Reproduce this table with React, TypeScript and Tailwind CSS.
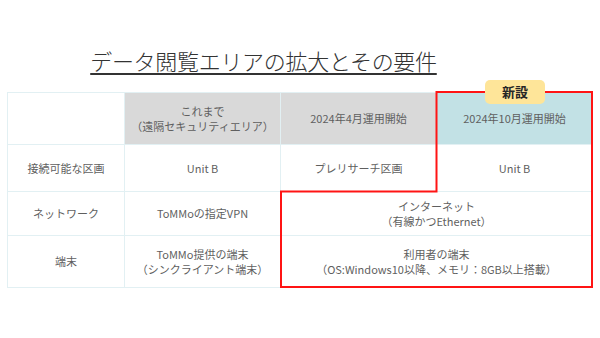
import React from "react";

const font = { fontFamily: '"Noto Sans CJK JP", "Noto Sans", sans-serif' };

function Cell({ children, className = "" }: { children?: React.ReactNode; className?: string }) {
  return (
    <div className={`flex flex-col items-center justify-center text-center text-[11px] leading-[15px] text-[#5f5f5f] ${className}`}>
      {children}
    </div>
  );
}

export default function App() {
  return (
    <div className="relative w-[600px] h-[338px] bg-white overflow-hidden" style={font}>
      <div className="flex justify-center pt-[46px] pr-[73px]">
        <h1 className="text-[22px] leading-[28px] font-light text-[#333333] underline decoration-[1.5px] underline-offset-[3px] tracking-[-0.3px]">
          データ閲覧エリアの拡大とその要件
        </h1>
      </div>
      <div className="relative ml-[7px] mt-[18px] w-[586px]">
        <div className="grid grid-cols-[116px_155px_155px_155px] grid-rows-[51px_46px_43px_51px] gap-px p-px bg-[#e2f0f3]">
          <Cell className="bg-white" />
          <Cell className="bg-[#d9d9d9]">
            <span>これまで</span>
            <span>（遠隔セキュリティエリア）</span>
          </Cell>
          <Cell className="bg-[#d9d9d9]">2024年4月運用開始</Cell>
          <Cell className="bg-[#c2e1e5]">2024年10月運用開始</Cell>

          <Cell className="bg-white">接続可能な区画</Cell>
          <Cell className="bg-white">Unit B</Cell>
          <Cell className="bg-white">プレリサーチ区画</Cell>
          <Cell className="bg-white">Unit B</Cell>

          <Cell className="bg-white">ネットワーク</Cell>
          <Cell className="bg-white">ToMMoの指定VPN</Cell>
          <Cell className="bg-white col-span-2">
            <span>インターネット</span>
            <span>（有線かつEthernet）</span>
          </Cell>

          <Cell className="bg-white">端末</Cell>
          <Cell className="bg-white">
            <span>ToMMo提供の端末</span>
            <span>（シンクライアント端末）</span>
          </Cell>
          <Cell className="bg-white col-span-2">
            <span>利用者の端末</span>
            <span>（OS:Windows10以降、メモリ：8GB以上搭載）</span>
          </Cell>
        </div>
        <svg className="absolute left-0 top-0 overflow-visible pointer-events-none" width="586" height="196">
          <polygon
            points="429.5,0 585,0 585,195 274,195 274,99.5 429.5,99.5"
            fill="none"
            stroke="#ff1414"
            strokeWidth="2"
          />
        </svg>
        <div className="absolute left-[478px] top-[-12px] w-[60px] h-[24px] rounded-[5px] bg-[#fee599] flex items-center justify-center text-[13px] font-bold text-[#262626]">
          新設
        </div>
      </div>
    </div>
  );
}
